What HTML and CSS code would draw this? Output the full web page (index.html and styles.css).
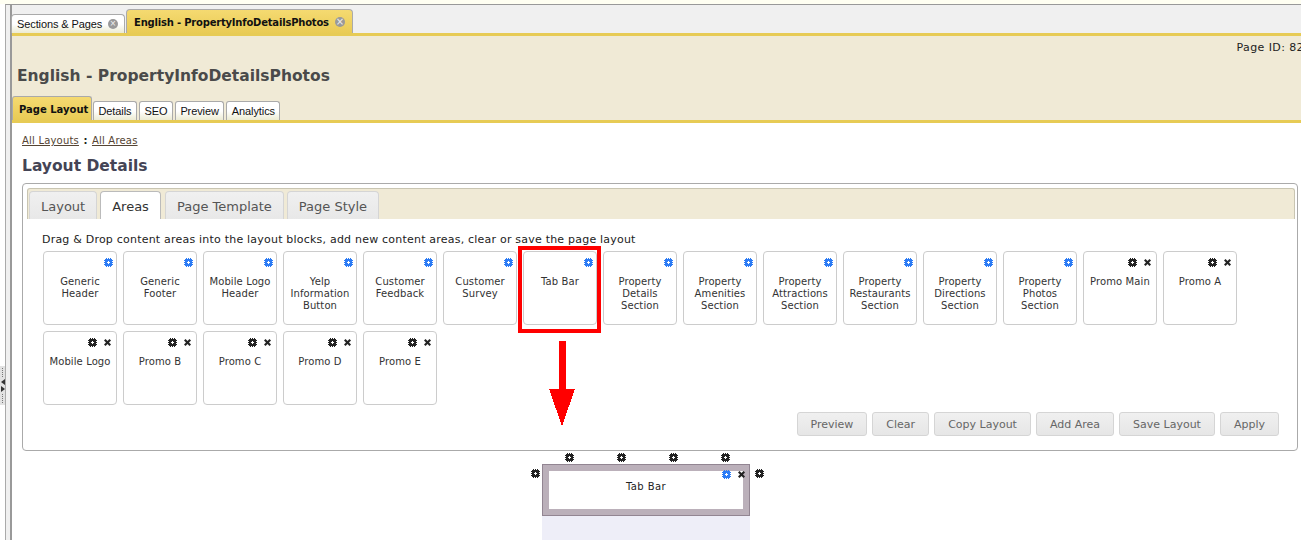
FILE: index.html
```html
<!DOCTYPE html>
<html lang="en">
<head>
  <meta charset="UTF-8">
  <meta name="viewport" content="width=device-width, initial-scale=1.0">
  <title>Page Layout</title>
  <link rel="stylesheet" href="styles.css">
</head>
<body>

<svg class="defs" width="0" height="0">
  <symbol id="gear" viewBox="0 0 9 9">
    <path d="M2 0h1v1H2zM4 0h1v1H4zM6 0h1v1H6zM1 1h7v1H1zM0 2h9v1H0zM1 3h3v1H1zM5 3h3v1H5zM0 4h3v1H0zM6 4h3v1H6zM1 5h3v1H1zM5 5h3v1H5zM0 6h9v1H0zM1 7h7v1H1zM2 8h1v1H2zM4 8h1v1H4zM6 8h1v1H6z"/>
  </symbol>
  <symbol id="cross" viewBox="0 0 7 7">
    <path d="M0 1.500L1.500 0l2 2 2-2L7 1.500l-2 2 2 2L5.500 7l-2-2-2 2L0 5.500l2-2z"/>
  </symbol>
</svg>

<div class="top-strip"></div>

<div class="splitter">
  <span class="splitter-dots"></span>
  <span class="splitter-left"></span>
  <span class="splitter-right"></span>
  <span class="splitter-dots"></span>
</div>

<div class="shell">
  <div class="main">

    <div class="doc-tabs">
      <div class="doc-tab">Sections &amp; Pages <span class="tab-close">×</span></div>
      <div class="doc-tab active">English - PropertyInfoDetailsPhotos <span class="tab-close">×</span></div>
    </div>

    <div class="page-head">
      <div class="page-id">Page ID: 82</div>
      <h1>English - PropertyInfoDetailsPhotos</h1>
      <div class="sub-tabs">
        <div class="sub-tab active">Page Layout</div>
        <div class="sub-tab">Details</div>
        <div class="sub-tab">SEO</div>
        <div class="sub-tab">Preview</div>
        <div class="sub-tab">Analytics</div>
      </div>
    </div>

    <div class="content">
      <div class="crumbs"><a href="#">All Layouts</a> <b>:</b> <a href="#">All Areas</a></div>
      <h2>Layout Details</h2>

      <div class="panel">
        <div class="panel-tabs">
          <div class="panel-tab">Layout</div>
          <div class="panel-tab active">Areas</div>
          <div class="panel-tab">Page Template</div>
          <div class="panel-tab">Page Style</div>
        </div>

        <p class="hint">Drag &amp; Drop content areas into the layout blocks, add new content areas, clear or save the page layout</p>

        <div class="cards">
          <div class="card"><div class="card-icons"><svg class="icon blue"><use href="#gear"/></svg></div><div class="card-label">Generic Header</div></div>
          <div class="card"><div class="card-icons"><svg class="icon blue"><use href="#gear"/></svg></div><div class="card-label">Generic Footer</div></div>
          <div class="card"><div class="card-icons"><svg class="icon blue"><use href="#gear"/></svg></div><div class="card-label">Mobile Logo Header</div></div>
          <div class="card"><div class="card-icons"><svg class="icon blue"><use href="#gear"/></svg></div><div class="card-label">Yelp Information Button</div></div>
          <div class="card"><div class="card-icons"><svg class="icon blue"><use href="#gear"/></svg></div><div class="card-label">Customer Feedback</div></div>
          <div class="card"><div class="card-icons"><svg class="icon blue"><use href="#gear"/></svg></div><div class="card-label">Customer Survey</div></div>
          <div class="card highlighted"><div class="card-icons"><svg class="icon blue"><use href="#gear"/></svg></div><div class="card-label">Tab Bar</div></div>
          <div class="card"><div class="card-icons"><svg class="icon blue"><use href="#gear"/></svg></div><div class="card-label">Property Details Section</div></div>
          <div class="card"><div class="card-icons"><svg class="icon blue"><use href="#gear"/></svg></div><div class="card-label">Property Amenities Section</div></div>
          <div class="card"><div class="card-icons"><svg class="icon blue"><use href="#gear"/></svg></div><div class="card-label">Property Attractions Section</div></div>
          <div class="card"><div class="card-icons"><svg class="icon blue"><use href="#gear"/></svg></div><div class="card-label">Property Restaurants Section</div></div>
          <div class="card"><div class="card-icons"><svg class="icon blue"><use href="#gear"/></svg></div><div class="card-label">Property Directions Section</div></div>
          <div class="card"><div class="card-icons"><svg class="icon blue"><use href="#gear"/></svg></div><div class="card-label">Property Photos Section</div></div>
          <div class="card"><div class="card-icons removable"><svg class="icon"><use href="#gear"/></svg><svg class="icon-x"><use href="#cross"/></svg></div><div class="card-label">Promo Main</div></div>
          <div class="card"><div class="card-icons removable"><svg class="icon"><use href="#gear"/></svg><svg class="icon-x"><use href="#cross"/></svg></div><div class="card-label">Promo A</div></div>
          <div class="card"><div class="card-icons removable"><svg class="icon"><use href="#gear"/></svg><svg class="icon-x"><use href="#cross"/></svg></div><div class="card-label">Mobile Logo</div></div>
          <div class="card"><div class="card-icons removable"><svg class="icon"><use href="#gear"/></svg><svg class="icon-x"><use href="#cross"/></svg></div><div class="card-label">Promo B</div></div>
          <div class="card"><div class="card-icons removable"><svg class="icon"><use href="#gear"/></svg><svg class="icon-x"><use href="#cross"/></svg></div><div class="card-label">Promo C</div></div>
          <div class="card"><div class="card-icons removable"><svg class="icon"><use href="#gear"/></svg><svg class="icon-x"><use href="#cross"/></svg></div><div class="card-label">Promo D</div></div>
          <div class="card"><div class="card-icons removable"><svg class="icon"><use href="#gear"/></svg><svg class="icon-x"><use href="#cross"/></svg></div><div class="card-label">Promo E</div></div>
        </div>

        <div class="actions">
          <button>Preview</button>
          <button>Clear</button>
          <button>Copy Layout</button>
          <button>Add Area</button>
          <button>Save Layout</button>
          <button>Apply</button>
        </div>

        <!-- annotation from the screenshot -->
        <svg class="arrow" width="26" height="85" viewBox="0 0 26 85">
          <path d="M10 0h7v48h9L13 85 0 48h10z" fill="#f00"/>
        </svg>
      </div>

      <div class="drop-zone">
        <div class="handles-top">
          <svg class="icon"><use href="#gear"/></svg>
          <svg class="icon"><use href="#gear"/></svg>
          <svg class="icon"><use href="#gear"/></svg>
          <svg class="icon"><use href="#gear"/></svg>
        </div>
        <div class="block-row">
          <svg class="icon handle-side"><use href="#gear"/></svg>
          <div class="block">
            <div class="block-icons"><svg class="icon blue"><use href="#gear"/></svg><svg class="icon-x"><use href="#cross"/></svg></div>
            <div class="block-label">Tab Bar</div>
          </div>
          <svg class="icon handle-side"><use href="#gear"/></svg>
        </div>
        <div class="block-foot"></div>
      </div>
    </div>

  </div>
</div>

</body>
</html>
```
FILE: styles.css
```css
html, body {
  margin: 0;
  padding: 0;
  height: 540px;
  overflow: hidden;
  background-color: #fff;
}
body {
  font-family: "DejaVu Sans", Verdana, sans-serif;
  font-size: 11px;
  color: #222;
  position: relative;
}
.defs {
  position: absolute;
}
.top-strip {
  height: 4px;
  background-color: #fffff2;
}

/* splitter handle on the left edge */
.splitter {
  position: absolute;
  left: 0;
  top: 366px;
  width: 5px;
  height: 39px;
  background-color: #e2e2e2;
  display: flex;
  flex-direction: column;
  align-items: center;
  justify-content: space-between;
  padding: 2px 0;
  box-sizing: border-box;
}
.splitter-dots {
  width: 1px;
  height: 9px;
  background-image: repeating-linear-gradient(#777 0 1px, transparent 1px 2px);
}
.splitter-left {
  border-right: 4px solid #333;
  border-top: 3px solid transparent;
  border-bottom: 3px solid transparent;
}
.splitter-right {
  border-left: 4px solid #333;
  border-top: 3px solid transparent;
  border-bottom: 3px solid transparent;
}

.shell {
  margin-left: 5px;
  border-top: 1px solid #999;
  border-left: 1px solid #aaa;
  background-color: #f0f0f0;
  padding-left: 4px;
  height: 535px;
}
.main {
  border-left: 2px solid #999;
  height: 100%;
}

/* document tabs */
.doc-tabs {
  display: flex;
  align-items: flex-end;
  height: 28px;
  margin-left: -1px;
  font-family: "Liberation Sans", Arial, sans-serif;
  font-size: 11px;
  letter-spacing: -0.1px;
}
.doc-tab {
  display: flex;
  align-items: center;
  justify-content: space-between;
  height: 19px;
  padding: 0 6px 0 5px;
  width: 114px;
  box-sizing: border-box;
  border: 1px solid #aaa;
  border-bottom: none;
  border-radius: 4px 4px 0 0;
  background: linear-gradient(#fff, #fff 50%, #ecebd2);
  white-space: nowrap;
  color: #111;
}
.doc-tab.active {
  height: 24px;
  width: 227px;
  margin-left: 1px;
  padding: 1px 7px 0 7px;
  background: linear-gradient(#f5da71, #e9cb55);
  font-family: "DejaVu Sans", Verdana, sans-serif;
  font-weight: bold;
  font-size: 10px;
  letter-spacing: -0.2px;
}
.tab-close {
  width: 10px;
  height: 10px;
  border-radius: 50%;
  background-color: #999;
  color: #eee;
  font-size: 10px;
  line-height: 10px;
  text-align: center;
  font-weight: normal;
  letter-spacing: 0;
}

/* page header */
.page-head {
  border-top: 3px solid #e7cb55;
  border-bottom: 3px solid #e7cb55;
  background-color: #f0ead6;
  height: 84px;
  position: relative;
  overflow: hidden;
}
.page-id {
  text-align: right;
  margin-right: -3px;
  padding-top: 5px;
  line-height: 13px;
  letter-spacing: 0.4px;
  white-space: nowrap;
  color: #222;
}
h1 {
  margin: 11px 0 0 5px;
  font-size: 15.5px;
  line-height: 22px;
  color: #4a4a4a;
  white-space: nowrap;
}
.sub-tabs {
  display: flex;
  align-items: flex-end;
  gap: 1px;
  position: absolute;
  left: 0;
  bottom: 0;
  font-family: "Liberation Sans", Arial, sans-serif;
  font-size: 11px;
  letter-spacing: -0.1px;
}
.sub-tab {
  height: 19px;
  line-height: 19px;
  padding: 0 4.5px;
  margin-left: 1px;
  box-sizing: border-box;
  border: 1px solid #aaa;
  border-bottom: none;
  border-radius: 3px 3px 0 0;
  background: linear-gradient(#fff, #fff 50%, #ecebd2);
  color: #111;
}
.sub-tab.active {
  height: 24px;
  line-height: 25px;
  width: 80px;
  margin: 0 -1px 0 0;
  padding: 0 6px;
  background: linear-gradient(#f5da71, #e9cb55);
  font-family: "DejaVu Sans", Verdana, sans-serif;
  font-weight: bold;
  font-size: 10px;
  letter-spacing: 0;
  white-space: nowrap;
}

/* content */
.content {
  background-color: #fff;
  height: 418px;
  padding: 12px 0 0 10px;
  box-sizing: border-box;
  overflow: hidden;
}
.crumbs {
  font-size: 10px;
  line-height: 12px;
  letter-spacing: 0.2px;
}
.crumbs a {
  color: #543;
}
.crumbs b {
  margin: 0 1px;
}
h2 {
  margin: 7px 0 0;
  font-size: 15.5px;
  line-height: 24px;
  color: #445;
}
.panel {
  position: relative;
  width: 1276px;
  height: 268px;
  margin-top: 5px;
  box-sizing: border-box;
  border: 1px solid #aaa;
  border-radius: 4px;
  padding: 4px 2px 0 4px;
}
.panel-tabs {
  display: flex;
  align-items: flex-end;
  gap: 3px;
  height: 31px;
  padding-left: 1px;
  box-sizing: border-box;
  background-color: #f0ead6;
  border: 1px solid #c9c5b2;
  border-bottom: none;
  border-radius: 3px 3px 0 0;
}
.panel-tab {
  height: 28px;
  line-height: 29px;
  padding: 0 11px;
  box-sizing: border-box;
  font-size: 13px;
  color: #555;
  border: 1px solid #d5d5d5;
  border-bottom: none;
  border-radius: 4px 4px 0 0;
  background: linear-gradient(#f0f0f0, #e8e8e8);
}
.panel-tab.active {
  color: #333;
  background: #fff;
  border-color: #bbb;
  margin-right: 1px;
}
.hint {
  margin: 14px 0 0 15px;
  line-height: 13px;
  letter-spacing: 0.21px;
  color: #222;
}
.cards {
  display: grid;
  grid-template-columns: repeat(15, 74px);
  gap: 6px;
  margin: 5px 0 0 16px;
}
.card {
  height: 74px;
  box-sizing: border-box;
  border: 1px solid #ccc;
  border-radius: 4px;
  position: relative;
  background-color: #fff;
}
.card.highlighted::after {
  content: "";
  position: absolute;
  left: -6px;
  top: -6px;
  width: 83px;
  height: 87px;
  box-sizing: border-box;
  border: 4px solid #f00;
}
.card-icons {
  display: flex;
  justify-content: flex-end;
  align-items: flex-start;
  height: 9px;
  padding: 6px 3px 0 0;
}
.card-icons.removable {
  gap: 7px;
  align-items: center;
  height: 10px;
  padding: 5px 5px 0 0;
}
.card-label {
  margin-top: 9px;
  padding: 0 2px;
  text-align: center;
  font-size: 10px;
  line-height: 12px;
  letter-spacing: 0.1px;
  color: #333;
}
.icon {
  display: block;
  width: 9px;
  height: 9px;
  fill: #222;
  flex: none;
  shape-rendering: crispEdges;
}
.icon.blue {
  fill: #2b7bf5;
}
.icon-x {
  display: block;
  width: 7px;
  height: 7px;
  fill: #222;
  flex: none;
}
.actions {
  display: flex;
  justify-content: flex-end;
  gap: 5px;
  margin: 7px 16px 0 0;
}
.actions button {
  height: 24px;
  padding: 0 13px;
  font-family: "DejaVu Sans", Verdana, sans-serif;
  font-size: 11px;
  color: #666;
  border: 1px solid #d5d5d5;
  border-radius: 3px;
  background: linear-gradient(#f0f0f0, #e6e6e6);
}
.arrow {
  position: absolute;
  left: 526px;
  top: 157px;
  shape-rendering: crispEdges;
}

/* layout block under the panel */
.drop-zone {
  width: 240px;
  margin: 2px 0 0 509px;
}
.handles-top {
  display: flex;
  gap: 43px;
  padding-left: 34px;
  height: 11px;
}
.block-row {
  display: flex;
  align-items: flex-start;
}
.handle-side {
  margin-top: 5px;
}
.block {
  width: 208px;
  height: 52px;
  margin: 0 5px 0 2px;
  flex: none;
  box-sizing: border-box;
  border: 7px solid #bbb0ba;
  outline: 1px solid #928592;
  outline-offset: -1px;
  background-color: #fff;
}
.block-icons {
  display: flex;
  justify-content: flex-end;
  align-items: center;
  gap: 7px;
  margin: -1px -2px 0 0;
  height: 9px;
}
.block-label {
  margin-top: 2px;
  text-align: center;
  font-size: 10px;
  line-height: 12px;
  letter-spacing: 0.4px;
}
.block-foot {
  width: 208px;
  height: 30px;
  margin-left: 11px;
  background-color: #eeeef8;
}
```
